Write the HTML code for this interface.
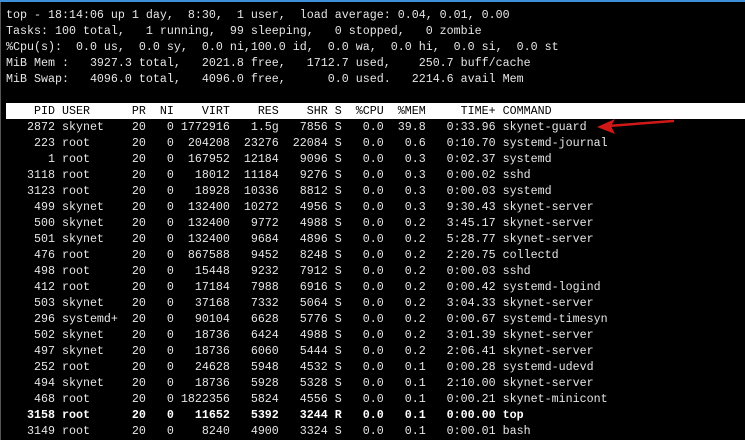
<!DOCTYPE html>
<html><head><style>
html,body{margin:0;padding:0;width:745px;height:440px;overflow:hidden;background:#000;}
#top{position:absolute;left:0;top:0;width:745px;height:2px;background:#3c8fd8;}
#lb{position:absolute;left:0;top:2px;width:1px;height:438px;background:#555;}
pre{margin:0;position:absolute;left:6px;font-family:"Liberation Mono",monospace;font-size:11.67px;line-height:16px;color:#e6e6e6;white-space:pre;}
#hdr{position:absolute;left:6px;top:103px;width:739px;height:16px;background:#fff;}
#hdr pre{left:0;top:0;color:#000;}
b{font-weight:bold;color:#fff;}
</style></head><body>
<div id="top"></div><div id="lb"></div>
<pre style="top:7px">top - 18:14:06 up 1 day,  8:30,  1 user,  load average: 0.04, 0.01, 0.00
Tasks: 100 total,   1 running,  99 sleeping,   0 stopped,   0 zombie
%Cpu(s):  0.0 us,  0.0 sy,  0.0 ni,100.0 id,  0.0 wa,  0.0 hi,  0.0 si,  0.0 st
MiB Mem :   3927.3 total,   2021.8 free,   1712.7 used,    250.7 buff/cache
MiB Swap:   4096.0 total,   4096.0 free,      0.0 used.   2214.6 avail Mem</pre>
<div id="hdr"><pre>    PID USER      PR  NI    VIRT    RES    SHR S  %CPU  %MEM     TIME+ COMMAND</pre></div>
<pre style="top:119px">   2872 skynet    20   0 1772916   1.5g   7856 S   0.0  39.8   0:33.96 skynet-guard
    223 root      20   0  204208  23276  22084 S   0.0   0.6   0:10.70 systemd-journal
      1 root      20   0  167952  12184   9096 S   0.0   0.3   0:02.37 systemd
   3118 root      20   0   18012  11184   9276 S   0.0   0.3   0:00.02 sshd
   3123 root      20   0   18928  10336   8812 S   0.0   0.3   0:00.03 systemd
    499 skynet    20   0  132400  10272   4956 S   0.0   0.3   9:30.43 skynet-server
    500 skynet    20   0  132400   9772   4988 S   0.0   0.2   3:45.17 skynet-server
    501 skynet    20   0  132400   9684   4896 S   0.0   0.2   5:28.77 skynet-server
    476 root      20   0  867588   9452   8248 S   0.0   0.2   2:20.75 collectd
    498 root      20   0   15448   9232   7912 S   0.0   0.2   0:00.03 sshd
    412 root      20   0   17184   7988   6916 S   0.0   0.2   0:00.42 systemd-logind
    503 skynet    20   0   37168   7332   5064 S   0.0   0.2   3:04.33 skynet-server
    296 systemd+  20   0   90104   6628   5776 S   0.0   0.2   0:00.67 systemd-timesyn
    502 skynet    20   0   18736   6424   4988 S   0.0   0.2   3:01.39 skynet-server
    497 skynet    20   0   18736   6060   5444 S   0.0   0.2   2:06.41 skynet-server
    252 root      20   0   24628   5948   4532 S   0.0   0.1   0:00.28 systemd-udevd
    494 skynet    20   0   18736   5928   5328 S   0.0   0.1   2:10.00 skynet-server
    468 root      20   0 1822356   5824   4556 S   0.0   0.1   0:00.21 skynet-minicont
<b>   3158 root      20   0   11652   5392   3244 R   0.0   0.1   0:00.00 top</b>
   3149 root      20   0    8240   4900   3324 S   0.0   0.1   0:00.01 bash</pre>
<svg style="position:absolute;left:0;top:0" width="745" height="440">
<line x1="673" y1="121" x2="608" y2="126" stroke="#d01818" stroke-width="2.5" stroke-linecap="round"/>
<polygon points="597,127 615,119 611,126 615,134" fill="#d01818"/>
</svg>
</body></html>
